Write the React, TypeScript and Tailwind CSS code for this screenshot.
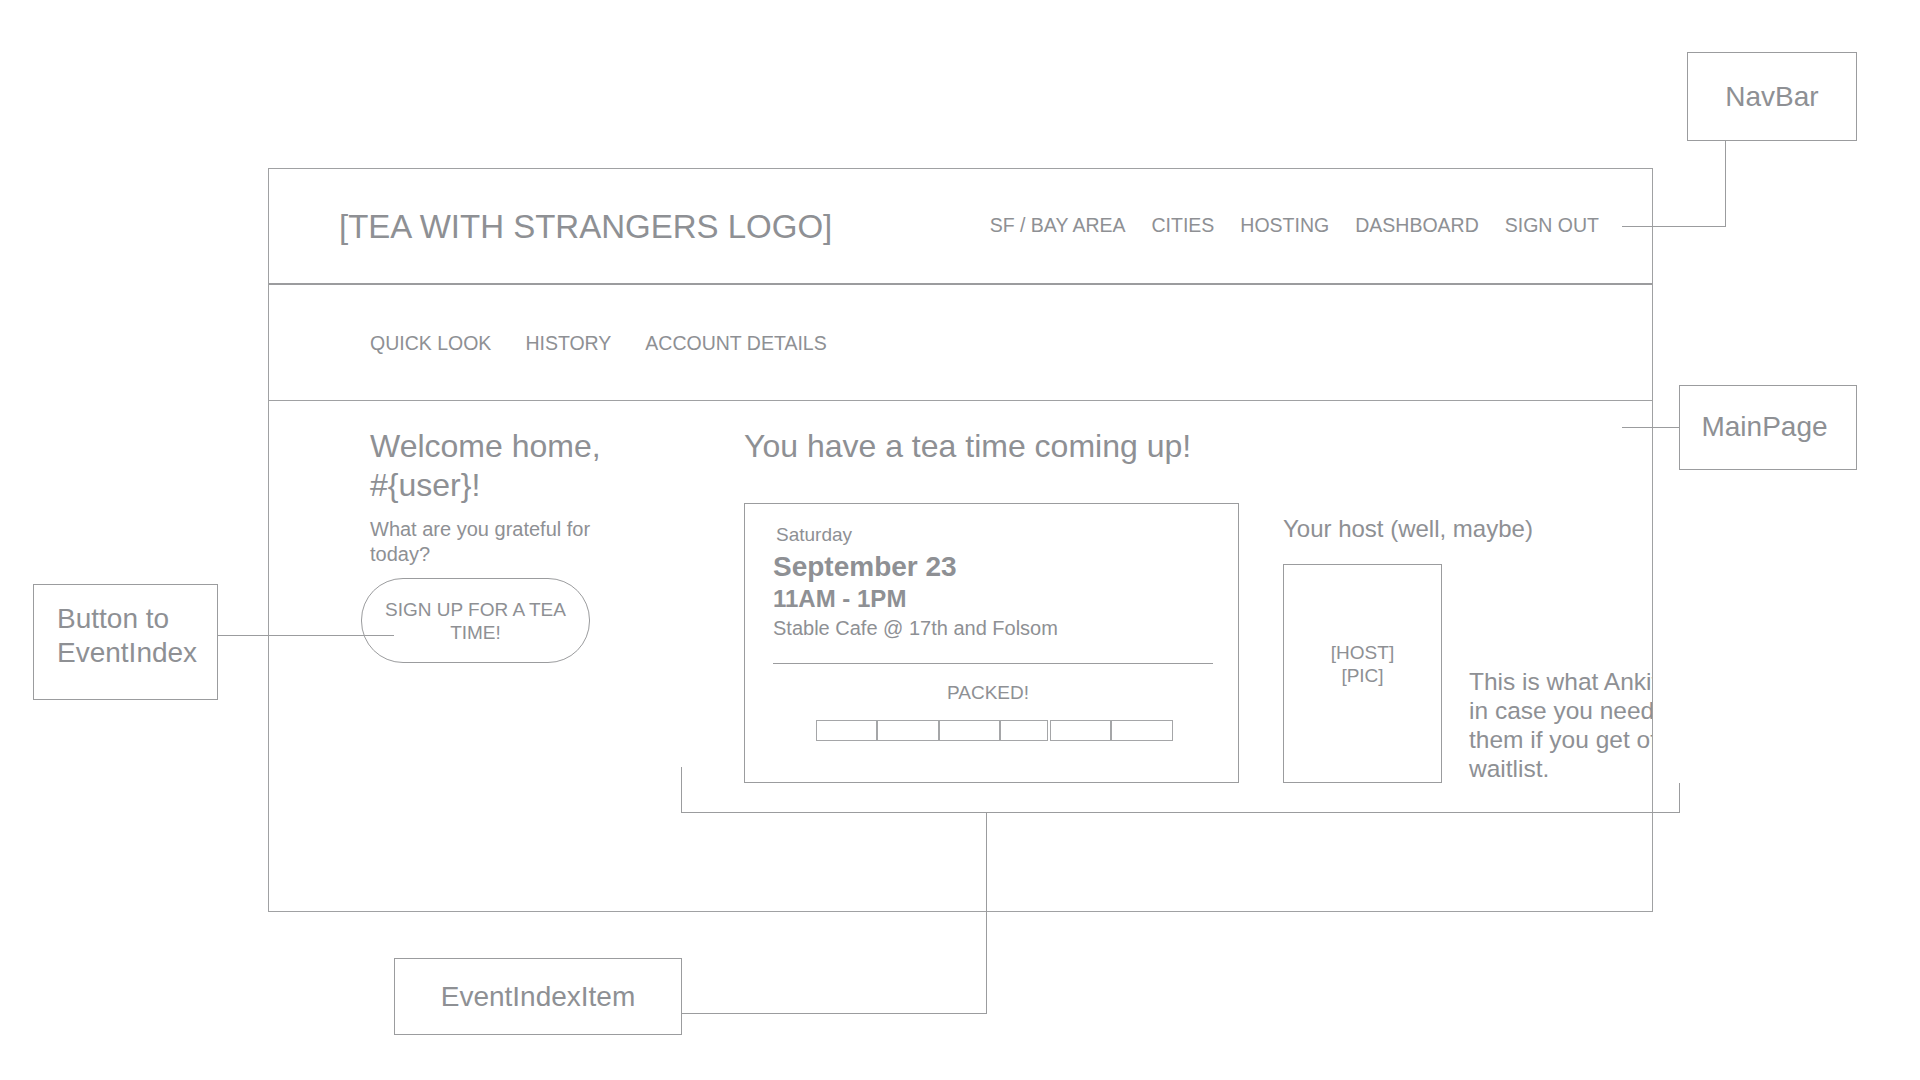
import React from "react"

const navLinks = ["SF / BAY AREA", "CITIES", "HOSTING", "DASHBOARD", "SIGN OUT"]
const tabs = ["QUICK LOOK", "HISTORY", "ACCOUNT DETAILS"]
// seat boxes under PACKED!, widths read off the mockup
const seats = [61, 62, 61, 48, 61, 62]

export default function App() {
  return (
    <div className="relative w-[1920px] h-[1080px] overflow-hidden bg-white text-[#8e9094] font-['Liberation_Sans',Arial,sans-serif]">
      {/* Wireframe frame */}
      <div className="absolute left-[268px] top-[168px] w-[1385px] h-[744px] border border-[#a0a1a3] overflow-hidden flex flex-col">
        {/* Nav bar */}
        <div className="h-[116px] shrink-0 border-b-2 border-[#9b9c9e] flex items-center pl-[70px] pr-[53px]">
          <div className="text-[33px] leading-none">[TEA WITH STRANGERS LOGO]</div>
          <div className="ml-auto flex items-center gap-[26px] text-[19.5px] leading-none">
            {navLinks.map((l) => (
              <span key={l}>{l}</span>
            ))}
          </div>
        </div>

        {/* Sub nav */}
        <div className="h-[116px] shrink-0 border-b border-[#a0a1a3] flex items-center pt-[3px] pl-[101px] gap-[34px] text-[19.5px] leading-none">
          {tabs.map((t) => (
            <span key={t}>{t}</span>
          ))}
        </div>

        {/* Main page */}
        <div className="flex-1 flex pl-[101px] pt-[26px]">
          <div className="w-[374px] shrink-0 flex flex-col items-start">
            <h1 className="w-[240px] text-[32px] leading-[39px]">{"Welcome home, #{user}!"}</h1>
            <p className="mt-[12px] w-[240px] text-[20px] leading-[25px]">What are you grateful for today?</p>
            <button className="mt-[11px] -ml-[9px] w-[229px] h-[85px] rounded-[42px] border border-[#9b9c9e] px-[18px] flex items-center justify-center text-center text-[19px] leading-[23px]">
              SIGN UP FOR A TEA TIME!
            </button>
          </div>

          <div className="flex flex-col shrink-0">
            <h2 className="text-[32px] leading-[39px]">You have a tea time coming up!</h2>
            <div className="mt-[37px] flex items-start gap-[44px]">
              {/* Event card */}
              <div className="w-[495px] h-[280px] shrink-0 border border-[#9b9c9e] pt-[19px] pl-[28px] pr-[25px] flex flex-col">
                <div className="ml-[3px] text-[19px] leading-[23px]">Saturday</div>
                <div className="mt-[4px] text-[28px] leading-[33px] font-bold">September 23</div>
                <div className="mt-[2px] text-[24px] leading-[28px] font-bold">11AM - 1PM</div>
                <div className="mt-[3px] text-[20px] leading-[24px]">Stable Cafe @ 17th and Folsom</div>
                <div className="mt-[23px] h-px bg-[#9b9c9e]" />
                <div className="mt-[17px] pr-[10px] text-center text-[19px] leading-[23px]">PACKED!</div>
                <div className="mt-[16px] ml-[43px] flex">
                  {seats.map((w, i) => (
                    <div
                      key={i}
                      style={{ width: w }}
                      className={`h-[21px] border border-[#a5a6a8] ${i === 4 ? "ml-[2px]" : ""}`}
                    />
                  ))}
                </div>
              </div>

              {/* Host */}
              <div className="shrink-0 pt-[12px] flex flex-col">
                <div className="text-[24px] leading-[28px]">Your host (well, maybe)</div>
                <div className="mt-[21px] flex items-end gap-[27px]">
                  <div className="w-[159px] h-[219px] shrink-0 border border-[#9b9c9e] pt-[76px] flex flex-col items-center text-[19px] leading-[23px]">
                    <span>[HOST]</span>
                    <span>[PIC]</span>
                  </div>
                  <p className="w-[312px] shrink-0 text-[24.5px] leading-[29px]">
                    This is what Ankit looks like, in case you need to contact them if you get off the waitlist.
                  </p>
                </div>
              </div>
            </div>
          </div>
        </div>
      </div>

      {/* Annotation boxes */}
      <div className="absolute left-[1687px] top-[52px] w-[170px] h-[89px] border border-[#9b9c9e] flex items-center justify-center text-[28px] leading-none">
        NavBar
      </div>
      <div className="absolute left-[1679px] top-[385px] w-[178px] h-[85px] border border-[#9b9c9e] flex items-center justify-center pb-[2px] pr-[7px] text-[28px] leading-none">
        MainPage
      </div>
      <div className="absolute left-[33px] top-[584px] w-[185px] h-[116px] border border-[#9b9c9e] pl-[23px] pt-[17px] text-[28px] leading-[34px]">
        <div>Button to</div>
        <div>EventIndex</div>
      </div>
      <div className="absolute left-[394px] top-[958px] w-[288px] h-[77px] border border-[#9b9c9e] flex items-center justify-center text-[28px] leading-none">
        EventIndexItem
      </div>

      {/* Connector lines */}
      <div className="absolute left-[1622px] top-[140px] w-[104px] h-[87px] border-r border-b border-[#9b9c9e]" />
      <div className="absolute left-[1622px] top-[427px] w-[57px] h-px bg-[#9b9c9e]" />
      <div className="absolute left-[217px] top-[635px] w-[177px] h-px bg-[#9b9c9e]" />
      <div className="absolute left-[681px] top-[767px] w-[999px] h-[46px] border-l border-b border-[#9b9c9e]" />
      <div className="absolute left-[1679px] top-[783px] w-px h-[30px] bg-[#9b9c9e]" />
      <div className="absolute left-[681px] top-[812px] w-[306px] h-[202px] border-r border-b border-[#9b9c9e]" />
    </div>
  )
}
